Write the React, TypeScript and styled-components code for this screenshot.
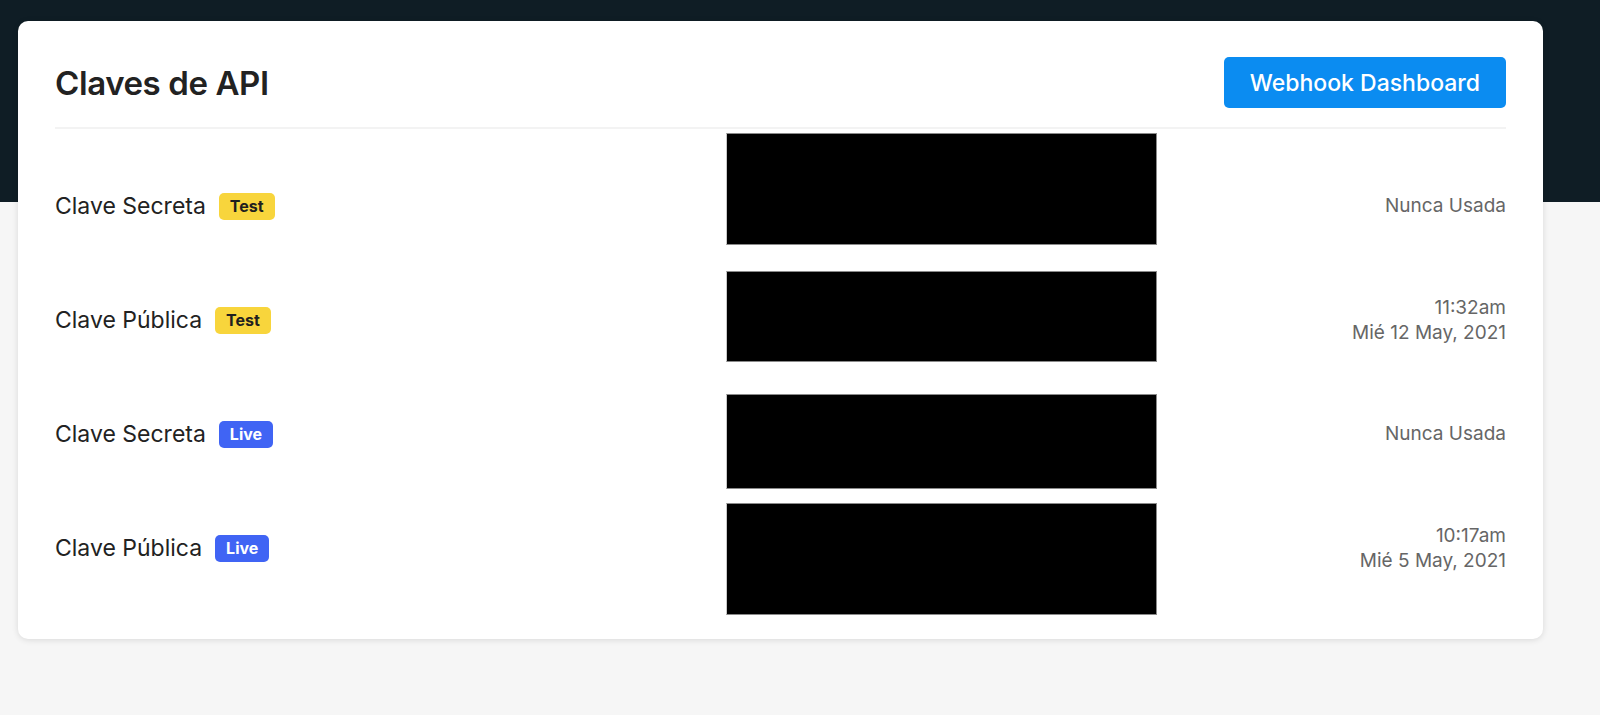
import React from "react";
import styled, { createGlobalStyle } from "styled-components";

const GlobalStyle = createGlobalStyle`
  html, body { margin: 0; padding: 0; }
  body {
    font-family: Inter, "Noto Sans", "Liberation Sans", sans-serif;
    background: #f6f6f6;
    -webkit-font-smoothing: antialiased;
  }
`;

const Page = styled.div`
  min-height: 715px;
  background: linear-gradient(#0f1d25 0, #0f1d25 202px, #f6f6f6 202px);
  padding: 21px 57px 0 18px;
  box-sizing: border-box;
`;

const Card = styled.section`
  background: #ffffff;
  border-radius: 10px;
  box-shadow: 0 1px 6px rgba(0, 0, 0, 0.12);
  padding: 36px 37px 34px 37px;
`;

const Header = styled.header`
  display: flex;
  align-items: center;
  justify-content: space-between;
  padding-bottom: 19px;
  border-bottom: 2px solid #f3f3f3;
`;

const Title = styled.h1`
  margin: 0;
  font-size: 33px;
  font-weight: 600;
  letter-spacing: -0.4px;
  color: #222222;
`;

const PrimaryButton = styled.button`
  height: 51px;
  padding: 0 26px;
  border: none;
  border-radius: 5px;
  background: #0b8cf1;
  color: #ffffff;
  font-family: inherit;
  font-size: 23px;
  font-weight: 500;
  cursor: pointer;
`;

const List = styled.div`
  display: flex;
  flex-direction: column;
  padding-top: 20px;
`;

const Row = styled.div`
  display: grid;
  grid-template-columns: 671px 431px 1fr;
  align-items: center;
  height: 114px;
`;

const LabelCell = styled.div`
  display: flex;
  align-items: center;
  gap: 13px;
`;

const KeyName = styled.span`
  font-size: 23px;
  color: #222222;
`;

const Badge = styled.span<{ $kind: "test" | "live" }>`
  display: inline-flex;
  align-items: center;
  height: 27px;
  padding: 0 11px;
  border-radius: 5px;
  font-size: 16px;
  font-weight: 700;
  background: ${(p) => (p.$kind === "test" ? "#f8d53c" : "#4064f4")};
  color: ${(p) => (p.$kind === "test" ? "#1f1f1f" : "#ffffff")};
`;

const SecretCell = styled.div`
  position: relative;
  align-self: stretch;
`;

const Redaction = styled.div`
  position: absolute;
  left: 0;
  right: 0;
  background: #000000;
  border: 1px solid #8a8a8a;
  border-left-color: #c8c8c8;
  box-sizing: border-box;
`;

const UsageCell = styled.div`
  text-align: right;
  font-size: 19px;
  line-height: 25.5px;
  color: #666666;
`;

type KeyRow = {
  name: string;
  kind: "test" | "live";
  top: number;
  height: number;
  usage: string[];
};

const rows: KeyRow[] = [
  { name: "Clave Secreta", kind: "test", top: -16, height: 112, usage: ["Nunca Usada"] },
  { name: "Clave Pública", kind: "test", top: 8, height: 91, usage: ["11:32am", "Mié 12 May, 2021"] },
  { name: "Clave Secreta", kind: "live", top: 17, height: 95, usage: ["Nunca Usada"] },
  { name: "Clave Pública", kind: "live", top: 12, height: 112, usage: ["10:17am", "Mié 5 May, 2021"] },
];

export default function App() {
  return (
    <>
      <GlobalStyle />
      <Page>
        <Card>
          <Header>
            <Title>Claves de API</Title>
            <PrimaryButton>Webhook Dashboard</PrimaryButton>
          </Header>
          <List>
            {rows.map((r, i) => (
              <Row key={i}>
                <LabelCell>
                  <KeyName>{r.name}</KeyName>
                  <Badge $kind={r.kind}>{r.kind === "test" ? "Test" : "Live"}</Badge>
                </LabelCell>
                <SecretCell>
                  <Redaction style={{ top: r.top, height: r.height }} />
                </SecretCell>
                <UsageCell>
                  {r.usage.map((u, j) => (
                    <div key={j}>{u}</div>
                  ))}
                </UsageCell>
              </Row>
            ))}
          </List>
        </Card>
      </Page>
    </>
  );
}
